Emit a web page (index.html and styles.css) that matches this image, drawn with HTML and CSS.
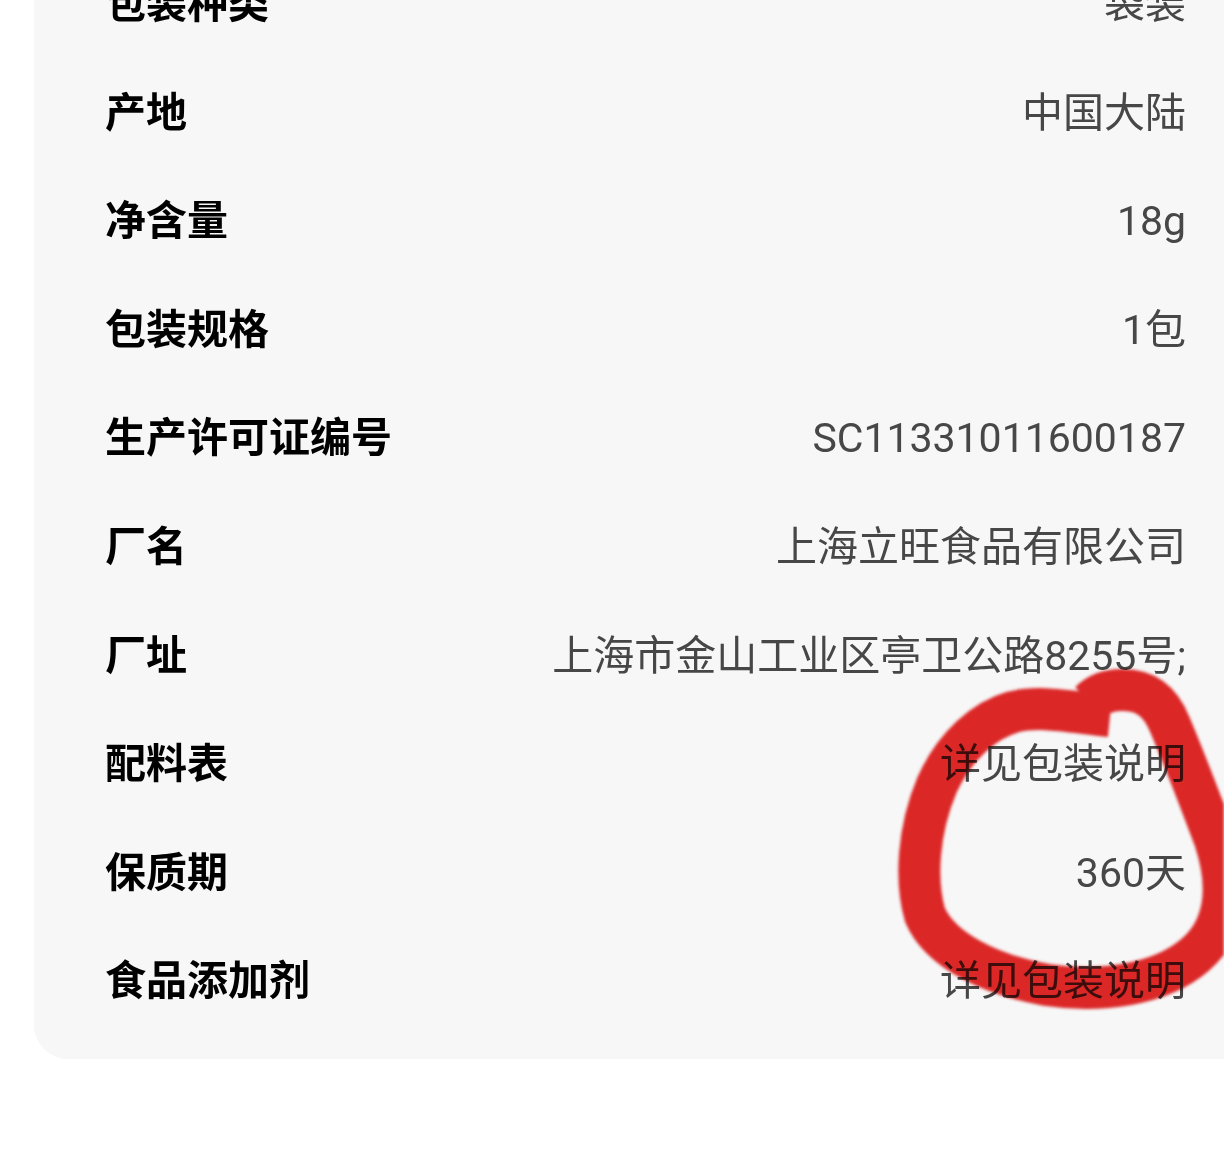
FILE: index.html
```html
<!DOCTYPE html>
<html lang="zh-CN">
<head>
    <meta charset="UTF-8">
    <meta name="viewport" content="width=device-width, initial-scale=1.0">
    <title>商品参数</title>
    <link rel="stylesheet" href="styles.css">
</head>
<body>
    <div class="page">
        <div class="param-card">
            <div class="param-row"><span class="param-label">包装种类</span><span class="param-value">袋装</span></div>
            <div class="param-row"><span class="param-label">产地</span><span class="param-value">中国大陆</span></div>
            <div class="param-row"><span class="param-label">净含量</span><span class="param-value">18g</span></div>
            <div class="param-row"><span class="param-label">包装规格</span><span class="param-value">1包</span></div>
            <div class="param-row"><span class="param-label">生产许可证编号</span><span class="param-value">SC11331011600187</span></div>
            <div class="param-row"><span class="param-label">厂名</span><span class="param-value">上海立旺食品有限公司</span></div>
            <div class="param-row"><span class="param-label">厂址</span><span class="param-value">上海市金山工业区亭卫公路8255号;</span></div>
            <div class="param-row"><span class="param-label">配料表</span><span class="param-value">详见包装说明</span></div>
            <div class="param-row"><span class="param-label">保质期</span><span class="param-value">360天</span></div>
            <div class="param-row"><span class="param-label">食品添加剂</span><span class="param-value">详见包装说明</span></div>
        </div>

        <!-- hand-drawn marker over the screenshot -->
        <svg class="scribble" width="1224" height="1165" viewBox="0 0 1224 1165">
            <path d="M1110 716 C1070 712 1040 705 1013 712 C985 720 955 745 937 785 C918 830 915 880 925 915 C940 950 990 975 1047 985 C1100 993 1160 985 1195 955 C1230 925 1228 880 1215 840 C1200 800 1185 760 1170 725 C1160 700 1145 690 1122 690 C1105 690 1095 697 1090 702"
                  fill="none" stroke="#e01010" stroke-width="42" stroke-linecap="butt" stroke-linejoin="round"/>
        </svg>
    </div>
</body>
</html>
```

FILE: styles.css
```css
html, body {
    margin: 0;
    padding: 0;
    background: #ffffff;
    overflow: hidden;
}
body {
    font-family: "Noto Sans CJK SC", "Noto Sans", sans-serif;
}
.page {
    position: relative;
    height: 1165px;
    overflow: hidden;
}
.param-card {
    margin-top: -54px;
    margin-left: 34px;
    margin-right: -40px;
    padding: 0 78px 27px 71px;
    background-color: #f7f7f7;
    border-radius: 0 0 34px 34px;
}
.param-row {
    display: flex;
    justify-content: space-between;
    align-items: baseline;
    height: 108.6px;
    font-size: 41px;
    line-height: 108.6px;
}
.param-label {
    color: #000;
    font-weight: 700;
}
.param-value {
    font-family: Roboto, "Noto Sans CJK SC", sans-serif;
    color: #474747;
    text-align: right;
}
.scribble {
    position: absolute;
    top: 0;
    left: 0;
    pointer-events: none;
    mix-blend-mode: multiply;
    opacity: 0.9;
    filter: blur(1.5px);
}
```
